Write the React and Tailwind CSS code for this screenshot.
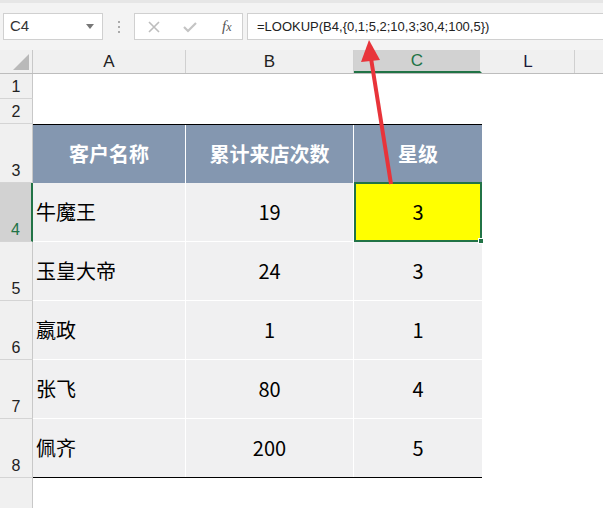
import React from "react";

const font = { fontFamily: '"Noto Sans CJK SC", "Noto Sans", sans-serif' };

const rows = [
  ["牛魔王", "19", "3"],
  ["玉皇大帝", "24", "3"],
  ["嬴政", "1", "1"],
  ["张飞", "80", "4"],
  ["佩齐", "200", "5"],
];

function RowHead({ n, h, active }) {
  return (
    <div
      className={`w-[33px] shrink-0 flex items-end justify-center text-[16px] leading-none pb-[3px] border-b border-[#d4d4d4] ${
        active ? "bg-[#d2d2d2] text-[#217346] border-r-2 border-r-[#217346]" : "bg-[#f0f0f0] text-[#222] border-r border-r-[#c8c8c8]"
      }`}
      style={{ height: h, fontFamily: '"Liberation Sans", sans-serif' }}
    >
      {n}
    </div>
  );
}

export default function App() {
  return (
    <div className="relative w-[603px] h-[508px] overflow-hidden bg-white" style={font}>
      {/* top formula bar */}
      <div className="h-[50px] bg-[#f3f3f3] border-t-[3px] border-t-[#e6e6e6] flex items-start pt-[10px] pl-[3px]">
        <div className="w-[100px] h-[27px] bg-white border border-[#d0d0d0] flex items-center justify-between pl-[6px] pr-[8px]">
          <span className="text-[15px] text-[#333]" style={{ fontFamily: '"Liberation Sans", sans-serif' }}>C4</span>
          <svg width="8" height="5" viewBox="0 0 8 5"><path d="M0 0 L8 0 L4 5 Z" fill="#777" /></svg>
        </div>
        <div className="w-[31px] h-[27px] flex flex-col items-center justify-center gap-[3px]">
          <div className="w-[2px] h-[2px] bg-[#aaa]" />
          <div className="w-[2px] h-[2px] bg-[#aaa]" />
          <div className="w-[2px] h-[2px] bg-[#aaa]" />
        </div>
        <div className="w-[109px] h-[27px] bg-white border border-[#d0d0d0] flex items-center">
          <svg className="ml-[13px]" width="12" height="12" viewBox="0 0 12 12">
            <path d="M1 1 L11 11 M11 1 L1 11" stroke="#bdbdbd" strokeWidth="1.6" />
          </svg>
          <svg className="ml-[23px]" width="14" height="12" viewBox="0 0 14 12">
            <path d="M1 6 L5 10 L13 2" stroke="#c4c4c4" strokeWidth="2.2" fill="none" />
          </svg>
          <span className="ml-[25px] text-[15px] italic text-[#555]" style={{ fontFamily: '"Liberation Serif", serif' }}>
            f<span className="text-[12px]">x</span>
          </span>
        </div>
        <div className="ml-[4px] flex-1 h-[27px] bg-white border border-[#d0d0d0] border-r-0 flex items-center pl-[9px]">
          <span className="text-[13px] text-[#222]" style={{ fontFamily: '"Liberation Sans", sans-serif' }}>
            =LOOKUP(B4,{"{"}0,1;5,2;10,3;30,4;100,5{"}"})
          </span>
        </div>
      </div>

      {/* column header */}
      <div className="h-[24px] flex bg-[#f0f0f0] border-b border-[#bdbdbd] text-[17px] text-[#222]" style={{ fontFamily: '"Liberation Sans", sans-serif' }}>
        <div className="w-[33px] relative border-r border-[#c8c8c8]">
          <svg className="absolute right-[3px] bottom-[3px]" width="16" height="16" viewBox="0 0 16 16">
            <path d="M16 0 L16 16 L0 16 Z" fill="#b9b9b9" />
          </svg>
        </div>
        <div className="w-[153px] flex items-center justify-center border-r border-[#d0d0d0]">A</div>
        <div className="w-[168px] flex items-center justify-center border-r border-[#d0d0d0]">B</div>
        <div className="w-[128px] flex items-center justify-center bg-[#d2d2d2] text-[#217346] border-b-2 border-[#217346] border-r-2 border-r-[#f0f0f0]">C</div>
        <div className="w-[93px] flex items-center justify-center border-r border-[#d0d0d0] text-[#1b1b3a]">L</div>
        <div className="flex-1" />
      </div>

      {/* rows 1-2 */}
      <div className="flex">
        <RowHead n="1" h={25} />
        <div className="flex-1" />
      </div>
      <div className="flex">
        <RowHead n="2" h={25} />
        <div className="flex-1" />
      </div>

      {/* row 3 header */}
      <div className="flex">
        <RowHead n="3" h={59} />
        <div className="flex h-[59px] border-t border-black w-[449px] bg-[#8497b0] text-white text-[20px] font-bold">
          <div className="w-[153px] flex items-center justify-center border-r border-white">客户名称</div>
          <div className="w-[168px] flex items-center justify-center border-r border-white">累计来店次数</div>
          <div className="w-[128px] flex items-center justify-center">星级</div>
        </div>
      </div>

      {/* data rows */}
      {rows.map((r, i) => (
        <div key={i} className="flex">
          <RowHead n={String(i + 4)} h={59} active={i === 0} />
          <div className={`flex h-[59px] w-[449px] bg-[#f0f0f1] text-[20px] text-black ${i === 4 ? "border-b border-black" : "border-b border-white"}`}>
            <div className="w-[153px] flex items-center pl-[3px] border-r border-white">{r[0]}</div>
            <div className="w-[168px] flex items-center justify-center border-r border-white">{r[1]}</div>
            {i === 0 ? (
              <div className="relative w-[128px] -mt-px h-[60px] flex items-center justify-center bg-[#ffff00] border-2 border-[#217346]">
                {r[2]}
                <div className="absolute -right-[4px] -bottom-[4px] w-[6px] h-[6px] bg-[#217346] border border-white" />
              </div>
            ) : (
              <div className="w-[128px] flex items-center justify-center">{r[2]}</div>
            )}
          </div>
        </div>
      ))}

      {/* row 9 */}
      <div className="flex">
        <RowHead n="" h={40} />
        <div className="flex-1" />
      </div>

      {/* red arrow */}
      <svg className="absolute left-0 top-0 pointer-events-none" width="603" height="508" viewBox="0 0 603 508">
        <path d="M391 184 L370 52" stroke="#e8343a" strokeWidth="4" />
        <path d="M369 40 L380 60 L361 62 Z" fill="#e8343a" />
      </svg>
    </div>
  );
}
